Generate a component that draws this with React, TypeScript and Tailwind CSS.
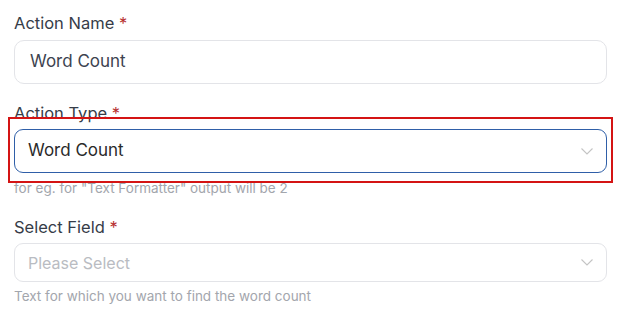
import React from "react";

function Chevron() {
  return (
    <svg width="12" height="7" viewBox="0 0 12 7" fill="none" className="shrink-0">
      <path d="M0.5 0.5 L6 6 L11.5 0.5" stroke="#c4c4c4" strokeWidth="1.1" />
    </svg>
  );
}

function Label({ children }: { children: React.ReactNode }) {
  return (
    <div className="text-[16.5px] leading-[24px] font-normal text-[#363c48]">
      {children} <span className="text-[#b83232]">*</span>
    </div>
  );
}

export default function App() {
  return (
    <div
      className="w-[635px] h-[335px] bg-white pl-[14px] pr-[28px] pt-[11px]"
      style={{ fontFamily: "Inter, 'Noto Sans', sans-serif" }}
    >
      <Label>Action Name</Label>
      <div className="mt-[5px] h-[44px] rounded-[10px] border border-[#e3e4e8] flex items-center px-[15px] text-[17px] text-[#3d4350]">
        Word Count
      </div>

      <div className="mt-[17px]">
        <Label>Action Type</Label>
      </div>
      <div className="relative mt-[4px]">
        <div className="h-[44px] rounded-[9px] border border-[#2f5fa8] flex items-center justify-between pl-[13px] pr-[13px] text-[17px] text-[#2a2a2a]">
          <span>Word Count</span>
          <Chevron />
        </div>
        <div className="absolute left-[-6px] right-[-6px] top-[-12px] bottom-[-10px] border-2 border-[#d41414] pointer-events-none" />
      </div>
      <div className="mt-[5px] text-[13.5px] leading-[20px] text-[#a3a6ad]">
        for eg. for "Text Formatter" output will be 2
      </div>

      <div className="mt-[17px]">
        <Label>Select Field</Label>
      </div>
      <div className="mt-[4px] h-[39px] rounded-[9px] border border-[#e3e4e8] flex items-center justify-between pl-[13px] pr-[13px] text-[16px] text-[#b9bcc2]">
        <span>Please Select</span>
        <Chevron />
      </div>
      <div className="mt-[4px] text-[13.5px] leading-[20px] text-[#a3a6ad]">
        Text for which you want to find the word count
      </div>
    </div>
  );
}
